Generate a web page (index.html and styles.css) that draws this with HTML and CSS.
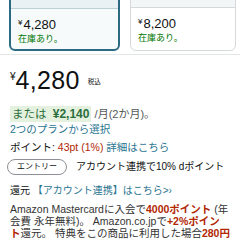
FILE: index.html
```html
<!DOCTYPE html>
<html lang="ja">
<head>
	<meta charset="UTF-8">
<link rel="stylesheet" href="styles.css">
</head>
<body>
<div id="wrap">
	<div class="cards">
		<div class="card selected">
			<div class="card-head">Kindle版 (電子書籍)</div>
			<div class="card-body">
				<p class="card-price"><span class="yen">¥</span>4,280</p>
				<p class="stock">在庫あり。</p>
			</div>
		</div>
		<div class="card">
			<div class="card-head">単行本 (ソフトカバー)</div>
			<div class="card-body">
				<p class="card-price"><span class="yen">¥</span>8,200</p>
				<p class="stock">在庫あり。</p>
			</div>
		</div>
	</div>

	<div class="main">
		<p class="price"><span class="yen">¥</span><span class="num">4,280</span><span class="tax">税込</span></p>
		<p class="plan"><span class="hl">または <b>¥2,140</b></span> <span class="per">/月(2か月)。</span></p>
		<p class="link">2つのプランから選択</p>
		<p class="point">ポイント: <span class="red">43pt</span> <span class="red">(1%)</span> <span class="link">詳細はこちら</span></p>
		<p class="entry"><span class="pill">エントリー</span>アカウント連携で10% dポイント還元 <span class="link">【アカウント連携】はこちら&gt;›</span></p>
		<p class="card-offer">Amazon Mastercardに入会で<b>4000ポイント</b> (年会費 永年無料)。 Amazon.co.jpで<b>+2%ポイント</b>還元。 特典をこの商品に利用した場合<b>280円</b></p>
	</div>
</div>
</body>
</html>
```
FILE: styles.css
```css
*{
	margin:0; padding:0;
}
body{
	font-family:"Liberation Sans","Noto Sans CJK JP",sans-serif;
	color:#0f1111;
	background:#fff;
	overflow:hidden;
}
#wrap{
	width:240px; height:240px;
	overflow:hidden;
}

/* 上のカード */
.cards{
	display:flex; gap:10px;
	margin-top:-17px;
	padding:0 0 3px 9px;
	border-bottom:1px solid #e3e6e6;
}
.card{
	width:104px;
	border:1px solid #d5d9d9;
	border-radius:0 0 6px 6px;
	background:#fff;
	overflow:hidden;
}
.card.selected{
	width:107px;
	border:2px solid #2b6a82;
	background:#f6fafb;
}
.card-head{
	height:23px;
	border-bottom:1px solid #d5d9d9;
	background:#f2f6f7;
	font-size:11px; line-height:17px;
	padding-left:8px;
	white-space:nowrap;
	color:#333;
}
.card.selected .card-head{
	border-bottom-color:#bcd0d8;
	background:#e9f1f4;
}
.card-body{
	padding:6px 7px 4px;
}
.card-price{
	font-size:13px; line-height:16px;
}
.card-price .yen{
	font-size:8px; vertical-align:4px; margin-right:1px;
}
.stock{
	font-size:9px; line-height:12px;
	color:#007600;
}

/* 価格 */
.main{
	padding:0 10px;
	font-size:10.5px;
}
.price{
	display:flex; align-items:flex-start;
	height:30px;
	margin-top:10px;
	line-height:30px;
}
.price .yen{
	font-size:10px; line-height:14px;
	margin-top:5px;
}
.price .num{
	font-size:25px; letter-spacing:0.3px;
}
.price .tax{
	font-size:6.5px; line-height:14px;
	margin:10px 0 0 8px;
}
.plan{
	margin-top:11px;
	font-size:11.5px;
	line-height:16px;
}
.hl{
	background:#e4f1df;
	color:#2b6e3c;
	padding:2px 2px;
}
.hl b{
	font-size:12px;
	margin-left:3px;
}
.per{
	color:#565959;
	font-size:11px;
}
.link{
	color:#2a7490;
	line-height:18px;
}
.plan + .link{
	margin-top:-2px;
}
.point{
	line-height:18px;
}
.red{
	color:#b12704;
}
.entry{
	font-size:10px;
	line-height:24px;
	margin-top:-1px;
}
.pill{
	display:inline-block;
	font-size:8px; line-height:14px;
	border:1px solid #8d9096;
	border-radius:9px;
	padding:0 9px;
	margin:0 9px 0 -3px;
	vertical-align:1px;
}
.card-offer{
	line-height:12px;
	color:#333;
}
.card-offer b{
	color:#b12704;
}
```
